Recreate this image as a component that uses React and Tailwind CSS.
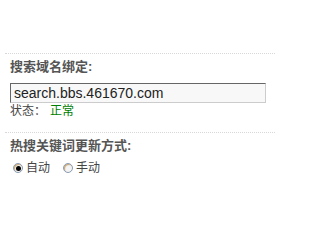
import React, { useState } from "react";

const Radio = ({ checked, label, onClick }) => {
  return (
    <label onClick={onClick} className="flex items-center cursor-pointer">
      <span className="w-[10px] h-[10px] rounded-full border border-[#8a9bb3] bg-[#f4f4f4] flex items-center justify-center shadow-[inset_1px_1px_1px_#c9a46b]">
        {checked && <span className="w-[5px] h-[5px] rounded-full bg-black" />}
      </span>
      <span className="ml-[3px]">{label}</span>
    </label>
  );
};

const App = () => {
  const [mode, setMode] = useState("auto");

  return (
    <div
      className="w-[275px] h-[200px] bg-white pt-[53px] text-[12px] text-[#333]"
      style={{ fontFamily: '"Liberation Sans", "Noto Sans CJK SC", sans-serif' }}
    >
      <div className="ml-[5px] border-t border-dotted border-[#d8d8d8] pl-[5px] pt-[4px]">
        <h2 className="font-bold text-[13px] text-[#555] leading-[18px]">搜索域名绑定:</h2>
        <input
          type="text"
          defaultValue="search.bbs.461670.com"
          className="mt-[7px] w-[256px] h-[20px] bg-[#f8f8f8] border border-t-[#666] border-l-[#666] border-r-[#ccc] border-b-[#ccc] pl-[3px] text-[14px] text-[#222] outline-none"
        />
        <div className="leading-[16px] text-[#444]">
          状态：<span className="ml-[4px] text-[#008000]">正常</span>
        </div>
      </div>

      <div className="mt-[13px] ml-[5px] border-t border-dotted border-[#d8d8d8] pl-[5px] pt-[4px]">
        <h2 className="font-bold text-[13px] text-[#555] leading-[18px]">热搜关键词更新方式:</h2>
        <div className="mt-[4px] flex items-center gap-[13px] pl-[3px] leading-[18px] text-[#444]">
          <Radio checked={mode === "auto"} label="自动" onClick={() => setMode("auto")} />
          <Radio checked={mode === "manual"} label="手动" onClick={() => setMode("manual")} />
        </div>
      </div>
    </div>
  );
};

export default App;
